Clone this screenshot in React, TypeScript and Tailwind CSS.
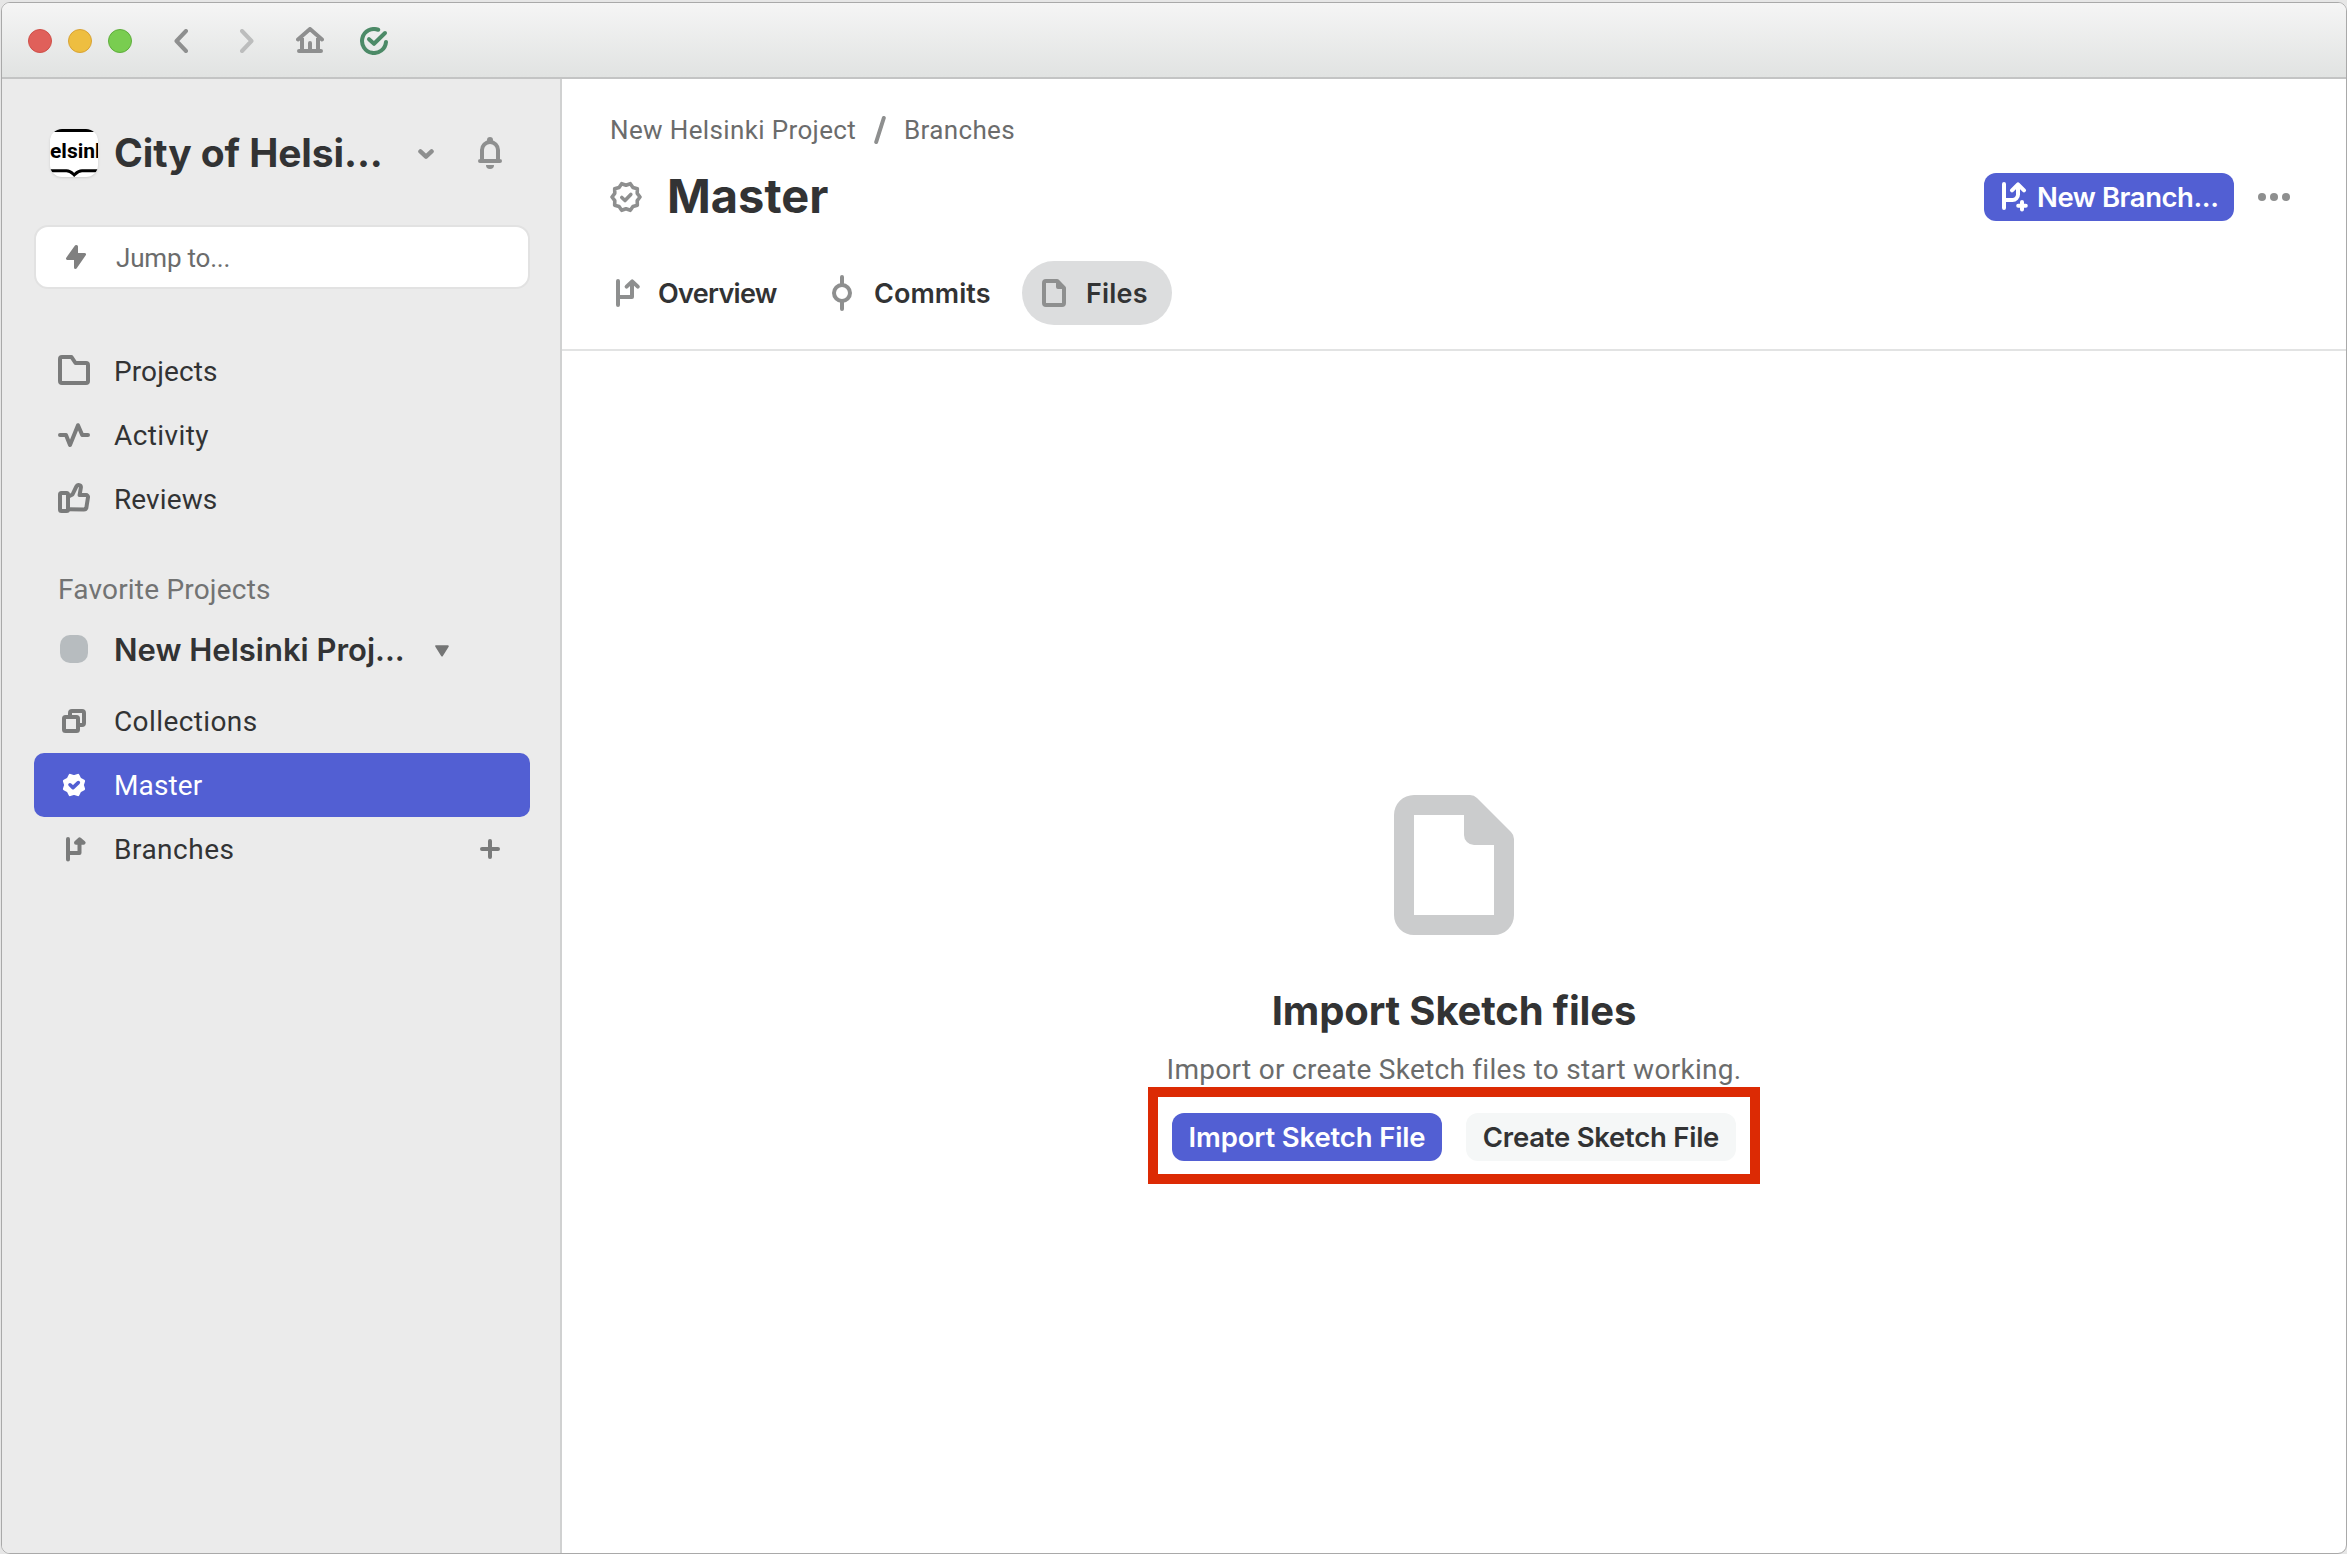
import React from "react";

type IconProps = { className?: string };

function starPath(cx: number, cy: number, points: number, outer: number, inner: number, offset: number) {
  const coords: string[] = [];
  for (let i = 0; i < points * 2; i++) {
    const r = i % 2 === 0 ? outer : inner;
    const a = offset + (Math.PI * i) / points;
    coords.push(`${(cx + r * Math.cos(a)).toFixed(2)} ${(cy + r * Math.sin(a)).toFixed(2)}`);
  }
  return `M${coords.join("L")}Z`;
}

function Stroke({ w, h, className, sw = 4, children }: { w: number; h: number; className?: string; sw?: number; children: React.ReactNode }) {
  return (
    <svg width={w} height={h} viewBox={`0 0 ${w} ${h}`} fill="none" stroke="currentColor" strokeWidth={sw} strokeLinecap="round" strokeLinejoin="round" className={`shrink-0 ${className ?? ""}`}>
      {children}
    </svg>
  );
}

const BackIcon = ({ className }: IconProps) => (
  <Stroke w={14} h={24} className={className}><path d="M12 2L2.5 12L12 22" /></Stroke>
);
const ForwardIcon = ({ className }: IconProps) => (
  <Stroke w={14} h={24} className={className}><path d="M2 2L11.5 12L2 22" /></Stroke>
);
const HomeIcon = ({ className }: IconProps) => (
  <Stroke w={28} h={26} className={className}>
    <path d="M2 12.5L14 2L26 12.5M6 11V24M22 11V24M3 24H25M14 16V24" />
  </Stroke>
);
const SyncedIcon = ({ className }: IconProps) => (
  <Stroke w={28} h={28} className={className}>
    <path d="M18.2 2.75A12 12 0 1 0 26 15" />
    <path d="M9 12.2L14 16.8L25 6" />
  </Stroke>
);
const ChevronIcon = ({ className }: IconProps) => (
  <Stroke w={16} h={10} sw={4.4} className={className}><path d="M2.4 2.4L8 7.6L13.6 2.4" /></Stroke>
);
const BellIcon = ({ className }: IconProps) => (
  <Stroke w={24} h={32} className={className}>
    <path d="M4 23V13a8 8 0 0 1 16 0V23M2 24H22" />
    <circle cx="12" cy="3" r="3" fill="currentColor" stroke="none" />
    <path d="M8 28H16a4 4 0 0 1-8 0Z" fill="currentColor" stroke="none" />
  </Stroke>
);
const BoltIcon = ({ className }: IconProps) => (
  <Stroke w={20} h={24} sw={3} className={className}>
    <path d="M10 1.5L1.5 13.5H9.5V22.5L18.5 9.5H10.5V1.5Z" fill="currentColor" />
  </Stroke>
);
const FolderIcon = ({ className }: IconProps) => (
  <Stroke w={32} h={30} className={className}>
    <path d="M4 2H13.5L17.5 8H28a2 2 0 0 1 2 2V26a2 2 0 0 1-2 2H4a2 2 0 0 1-2-2V4a2 2 0 0 1 2-2Z" />
  </Stroke>
);
const ActivityIcon = ({ className }: IconProps) => (
  <Stroke w={32} h={24} className={className}><path d="M2 12H8L12 22L20 2.2L24.2 12H30" /></Stroke>
);
const ThumbIcon = ({ className }: IconProps) => (
  <Stroke w={32} h={30} className={className}>
    <rect x="2" y="10" width="8" height="18" rx="1.5" />
    <path d="M10.5 13.5L14.5 11.5L18.3 3.6C19.6 1 23.4 1.8 22.8 5L21.6 12H28a2 2 0 0 1 2 2.3L28.4 24.5a2.6 2.6 0 0 1-2.6 2.1L10.5 26.2" />
  </Stroke>
);
const CollectionsIcon = ({ className }: IconProps) => (
  <Stroke w={24} h={24} className={className}>
    <rect x="2" y="8" width="14" height="14" rx="1.5" />
    <path d="M8 7V4a2 2 0 0 1 2-2H20a2 2 0 0 1 2 2V14a2 2 0 0 1-2 2H17" />
  </Stroke>
);
const BranchIcon = ({ className }: IconProps) => (
  <Stroke w={32} h={32} className={className}>
    <path d="M8 4V28M8 20H22V6" />
    <path d="M16.6 9.6L22.2 4.4L27.8 9.6" />
  </Stroke>
);
const SmallBranchIcon = ({ className }: IconProps) => (
  <Stroke w={28} h={28} className={className}>
    <path d="M8 4V24.5M8 18H19.5V8" />
    <path d="M16 7.7L19.5 4.4L23.6 7.7Z" fill="currentColor" />
  </Stroke>
);
const NewBranchIcon = ({ className }: IconProps) => (
  <Stroke w={26} h={30} className={className}>
    <path d="M2 2V26M2 18H10.5a5.5 5.5 0 0 0 5.5-5.5V3M10 8.3L16 2.3L22 8.3M20 20V27.6M16.2 23.8H23.8" />
  </Stroke>
);
const BadgeIcon = ({ className }: IconProps) => (
  <Stroke w={32} h={32} sw={3.6} className={className}>
    <path d={starPath(16, 16, 10, 14, 11.8, 0)} />
    <path d="M11.8 16.5L15 19.5L20.8 13.4" />
  </Stroke>
);
const SolidBadgeIcon = ({ className }: IconProps) => (
  <Stroke w={24} h={24} sw={3} className={className}>
    <path d={starPath(12, 12, 8, 10.4, 8.3, Math.PI / 8)} fill="currentColor" />
    <path d="M8 11.8L11 14.6L16.3 9.6" stroke="#525fd3" strokeWidth={3.6} />
  </Stroke>
);
const CommitIcon = ({ className }: IconProps) => (
  <Stroke w={20} h={36} className={className}>
    <circle cx="10" cy="18" r="8" />
    <path d="M10 2V9M10 27V34" />
  </Stroke>
);
const FileIcon = ({ className, width }: IconProps & { width: number }) => (
  <svg width={width} height={(width * 28) / 24} viewBox="0 0 24 28" fill="currentColor" fillRule="evenodd" className={`shrink-0 ${className ?? ""}`}>
    <path d="M4 0H15.2a2 2 0 0 1 1.4.6L23.4 7.4A2 2 0 0 1 24 8.8V24a4 4 0 0 1-4 4H4a4 4 0 0 1-4-4V4a4 4 0 0 1 4-4ZM4 4V24H20V10H16a2 2 0 0 1-2-2V4Z" />
  </svg>
);
const PlusIcon = ({ className }: IconProps) => (
  <Stroke w={20} h={20} className={className}><path d="M10 2V18M2 10H18" /></Stroke>
);

function TitleBar() {
  return (
    <div className="flex h-[76px] shrink-0 items-center border-b-2 border-[#c3c4c4] bg-linear-to-b from-[#f5f5f5] to-[#e1e3e2] pt-0.5 pl-[26px]">
      <div className="flex gap-4">
        <span className="size-6 rounded-full border border-[#cf5049] bg-[#e0605a]" />
        <span className="size-6 rounded-full border border-[#d9a335] bg-[#eebe40]" />
        <span className="size-6 rounded-full border border-[#5fae3c] bg-[#79cd50]" />
      </div>
      <BackIcon className="ml-[42px] text-[#8e8f8f]" />
      <ForwardIcon className="ml-[52px] text-[#bcbdbd]" />
      <HomeIcon className="-mt-0.5 ml-[42px] text-[#8e8f8f]" />
      <SyncedIcon className="ml-9 text-[#4c8a67]" />
    </div>
  );
}

function TeamLogo() {
  return (
    <div className="relative flex size-12 shrink-0 items-center overflow-hidden rounded-xl bg-white shadow-sm">
      <svg width="48" height="48" viewBox="0 0 48 48" className="absolute inset-0" fill="none" stroke="#000" strokeWidth="3">
        <path d="M0 1.5H48" />
        <path d="M0 41.8H16.5C20.5 41.8 22 44 24.2 46C26.4 44 28 41.8 32 41.8H48" />
      </svg>
      <span className="relative -mt-1 text-[21px] leading-6 font-bold whitespace-nowrap text-black">elsink</span>
    </div>
  );
}

function NavRow({ icon, label, spacing, active, action }: { icon: React.ReactNode; label: string; spacing: string; active?: boolean; action?: React.ReactNode }) {
  return (
    <div className={`flex h-16 items-center rounded-[10px] pr-[30px] ${active ? "bg-[#525fd3] text-white" : "text-[#323334]"}`}>
      <span className={`ml-5 flex w-10 shrink-0 justify-center ${active ? "text-white" : "text-[#7a7b7b]"}`}>{icon}</span>
      <span className={`ml-5 flex-1 pt-0.5 text-[28px] leading-8 ${spacing}`}>{label}</span>
      {action}
    </div>
  );
}

function Sidebar() {
  return (
    <aside className="w-[560px] shrink-0 border-r-2 border-[#d0d1d1] bg-[#ebebeb] px-8 pt-[50px]">
      <div className="flex h-12 items-center pl-4">
        <TeamLogo />
        <h1 className="ml-4 w-[304px] font-[Inter,sans-serif] text-[39px] leading-[48px] font-bold tracking-[-0.1px] whitespace-nowrap text-[#323334]">City of Helsi...</h1>
        <ChevronIcon className="mt-0.5 text-[#8e8f8f]" />
        <BellIcon className="ml-11 text-[#8e8f8f]" />
      </div>
      <div className="mt-12 flex h-16 w-[496px] items-center rounded-[14px] border-2 border-[#e2e2e2] bg-white pl-[30px]">
        <BoltIcon className="text-[#808080]" />
        <span className="ml-[30px] pt-0.5 text-[26px] leading-8 tracking-[-0.2px] text-[#6b6c6c]">Jump to...</span>
      </div>
      <nav className="mt-[50px] w-[496px]">
        <NavRow icon={<FolderIcon className="-mt-0.5" />} label="Projects" spacing="tracking-[0.1px]" />
        <NavRow icon={<ActivityIcon />} label="Activity" spacing="tracking-[0.4px]" />
        <NavRow icon={<ThumbIcon className="-mt-0.5" />} label="Reviews" spacing="tracking-[0.1px]" />
      </nav>
      <h2 className="mt-[35px] mb-[-1px] pl-6 text-[28px] leading-[48px] tracking-[0.2px] text-[#727373]">Favorite Projects</h2>
      <div className="flex h-[76px] items-center pl-[26px]">
        <span className="mb-1 size-7 rounded-[10px] bg-[#b7bcbf]" />
        <span className="mb-0.5 ml-[26px] w-[321px] font-[Inter,sans-serif] text-[31px] font-semibold whitespace-nowrap text-[#323334]">New Helsinki Proj...</span>
        <svg width="14" height="12" viewBox="0 0 14 12" className="text-[#747575]" fill="currentColor" stroke="currentColor" strokeWidth="2" strokeLinejoin="round">
          <path d="M1.2 1.2H12.8L7 10.5Z" />
        </svg>
      </div>
      <nav className="w-[496px]">
        <NavRow icon={<CollectionsIcon />} label="Collections" spacing="tracking-[0.4px]" />
        <NavRow icon={<SolidBadgeIcon />} label="Master" spacing="tracking-[0.1px]" active />
        <NavRow icon={<SmallBranchIcon />} label="Branches" spacing="tracking-[0.5px]" action={<PlusIcon className="text-[#7a7b7b]" />} />
      </nav>
    </aside>
  );
}

function Header() {
  return (
    <header className="shrink-0 border-b-2 border-[#e2e3e3] pt-[35px] pr-14 pb-6 pl-12">
      <div className="flex h-8 items-center text-[26px] leading-8 tracking-[0.36px] text-[#6b6c6c]">
        <span className="w-[264px]">New Helsinki Project</span>
        <Stroke w={12} h={28} className="text-[#8e8f8f]"><path d="M2.2 26L9.8 2" /></Stroke>
        <span className="ml-[18px]">Branches</span>
      </div>
      <div className="mt-[27px] flex h-12 items-center font-[Inter,sans-serif]">
        <BadgeIcon className="text-[#8e8f8f]" />
        <h1 className="-mt-0.5 ml-[25px] flex-1 text-[47px] leading-[48px] font-bold text-[#323334]">Master</h1>
        <button className="flex h-12 w-[250px] items-center rounded-xl bg-[#525fd3] pl-[18px] text-white">
          <NewBranchIcon />
          <span className="ml-[9px] text-[27.5px] leading-8 font-semibold tracking-[-0.45px]">New Branch...</span>
        </button>
        <div className="ml-6 flex gap-1 text-[#8e8f8f]">
          <span className="size-2 rounded-full bg-current" />
          <span className="size-2 rounded-full bg-current" />
          <span className="size-2 rounded-full bg-current" />
        </div>
      </div>
      <div className="mt-10 -ml-4 flex h-16 font-[Inter,sans-serif] text-[27px] font-semibold text-[#323334]">
        <div className="flex w-[216px] items-center gap-4 pl-4 tracking-[-0.7px]">
          <BranchIcon className="text-[#8e8f8f]" />
          <span className="pt-0.5">Overview</span>
        </div>
        <div className="flex w-[212px] items-center gap-4 pl-4 tracking-[0.05px]">
          <span className="flex w-8 justify-center"><CommitIcon className="text-[#8e8f8f]" /></span>
          <span className="pt-0.5">Commits</span>
        </div>
        <div className="flex w-[150px] items-center gap-4 rounded-full bg-[#dcddde] pl-4 tracking-[0.2px]">
          <span className="flex w-8 justify-center"><FileIcon width={24} className="text-[#8e8f8f]" /></span>
          <span className="pt-0.5">Files</span>
        </div>
      </div>
    </header>
  );
}

function EmptyState() {
  return (
    <section className="flex flex-1 flex-col items-center pt-[444px]">
      <FileIcon width={120} className="text-[#cbcccd]" />
      <h2 className="mt-[52px] font-[Inter,sans-serif] text-[40px] leading-[48px] font-bold tracking-[-0.15px] text-[#323334]">Import Sketch files</h2>
      <p className="mt-[15px] mb-[-1px] text-[28px] leading-[40px] tracking-[0.28px] text-[#6b6c6c]">Import or create Sketch files to start working.</p>
      <div className="-mt-0.5 flex h-[97px] w-[612px] gap-6 border-10 border-[#dc2a04] px-3.5 pt-4 font-[Inter,sans-serif]">
        <button className="h-12 w-[270px] rounded-xl bg-[#525fd3] text-[27.5px] leading-8 font-semibold tracking-[-0.15px] whitespace-nowrap text-white">Import Sketch File</button>
        <button className="h-12 w-[270px] rounded-xl bg-[#f5f7f7] text-[27.5px] leading-8 font-semibold tracking-[-0.25px] whitespace-nowrap text-[#323334]">Create Sketch File</button>
      </div>
    </section>
  );
}

export default function App() {
  return (
    <div className="flex h-[1554px] w-[2347px] bg-[#e6e6e6] pt-0.5 pl-px font-[Roboto,sans-serif]">
      <div className="flex flex-1 flex-col overflow-hidden rounded-[9px] border border-[#a9a9a9] bg-white">
        <TitleBar />
        <div className="flex flex-1">
          <Sidebar />
          <main className="flex flex-1 flex-col">
            <Header />
            <EmptyState />
          </main>
        </div>
      </div>
    </div>
  );
}
